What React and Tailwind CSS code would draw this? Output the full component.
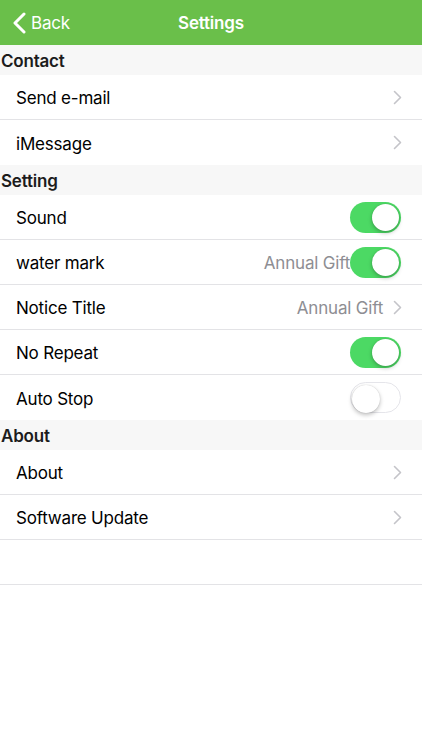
import React from "react";

const Chevron = () => (
  <svg width="9" height="15" viewBox="0 0 9 15" className="-mr-[1px] shrink-0">
    <path d="M1.5 1.5 L7.5 7.5 L1.5 13.5" fill="none" stroke="#c4c4c9" strokeWidth="1.6" strokeLinecap="round" strokeLinejoin="round" />
  </svg>
);

const Toggle = ({ on }) => (
  <div
    className={`relative h-[31px] w-[51px] shrink-0 rounded-full ${on ? "bg-[#4cd964]" : "bg-white border-[1.5px] border-[#e5e5ea]"}`}
  >
    <div
      className={`absolute top-[2px] h-[27px] w-[27px] rounded-full bg-white shadow-[0_2px_4px_rgba(0,0,0,0.25),0_0_1px_rgba(0,0,0,0.2)] ${on ? "right-[2px]" : "left-[0.5px] top-[0.5px] h-[28px] w-[28px]"}`}
    />
  </div>
);

const Section = ({ title }) => (
  <div className="flex h-[30px] items-center bg-[#f7f7f7] pl-[1px] pt-[4px] text-[17px] font-semibold text-[#1c1c1c]">
    {title}
  </div>
);

const Row = ({ label, value, chevron, toggle, border = true }) => (
  <div className={`flex h-[45px] items-center bg-white pl-[16px] pr-[21px] ${border ? "border-b border-[#e3e3e6]" : ""}`}>
    <span className="flex-1 pt-[4px] text-[17px] text-black">{label}</span>
    {value && <span className={`pt-[4px] text-[17px] text-[#8e8e93] ${chevron ? "mr-[10px]" : ""}`}>{value}</span>}
    {chevron && <Chevron />}
    {toggle !== undefined && <Toggle on={toggle} />}
  </div>
);

export default function App() {
  return (
    <div className="h-[750px] w-[422px] bg-white font-['Inter','Liberation_Sans',sans-serif] tracking-[-0.2px]">
      <div className="relative flex h-[45px] items-center bg-[#6abf4a]">
        <div className="flex items-center pl-[13px] text-white">
          <svg width="13" height="22" viewBox="0 0 13 22">
            <path d="M11 2 L2 11 L11 20" fill="none" stroke="white" strokeWidth="3" strokeLinecap="round" strokeLinejoin="round" />
          </svg>
          <span className="ml-[5px] pt-[2px] text-[17px]">Back</span>
        </div>
        <div className="pointer-events-none absolute left-0 right-0 pt-[2px] text-center text-[17px] font-semibold text-white">
          Settings
        </div>
      </div>
      <Section title="Contact" />
      <Row label="Send e-mail" chevron />
      <Row label="iMessage" chevron border={false} />
      <Section title="Setting" />
      <Row label="Sound" toggle={true} />
      <Row label="water mark" value="Annual Gift" toggle={true} />
      <Row label="Notice Title" value="Annual Gift" chevron />
      <Row label="No Repeat" toggle={true} />
      <Row label="Auto Stop" toggle={false} border={false} />
      <Section title="About" />
      <Row label="About" chevron />
      <Row label="Software Update" chevron />
      <div className="h-[45px] border-b border-[#e3e3e6]" />
    </div>
  );
}
